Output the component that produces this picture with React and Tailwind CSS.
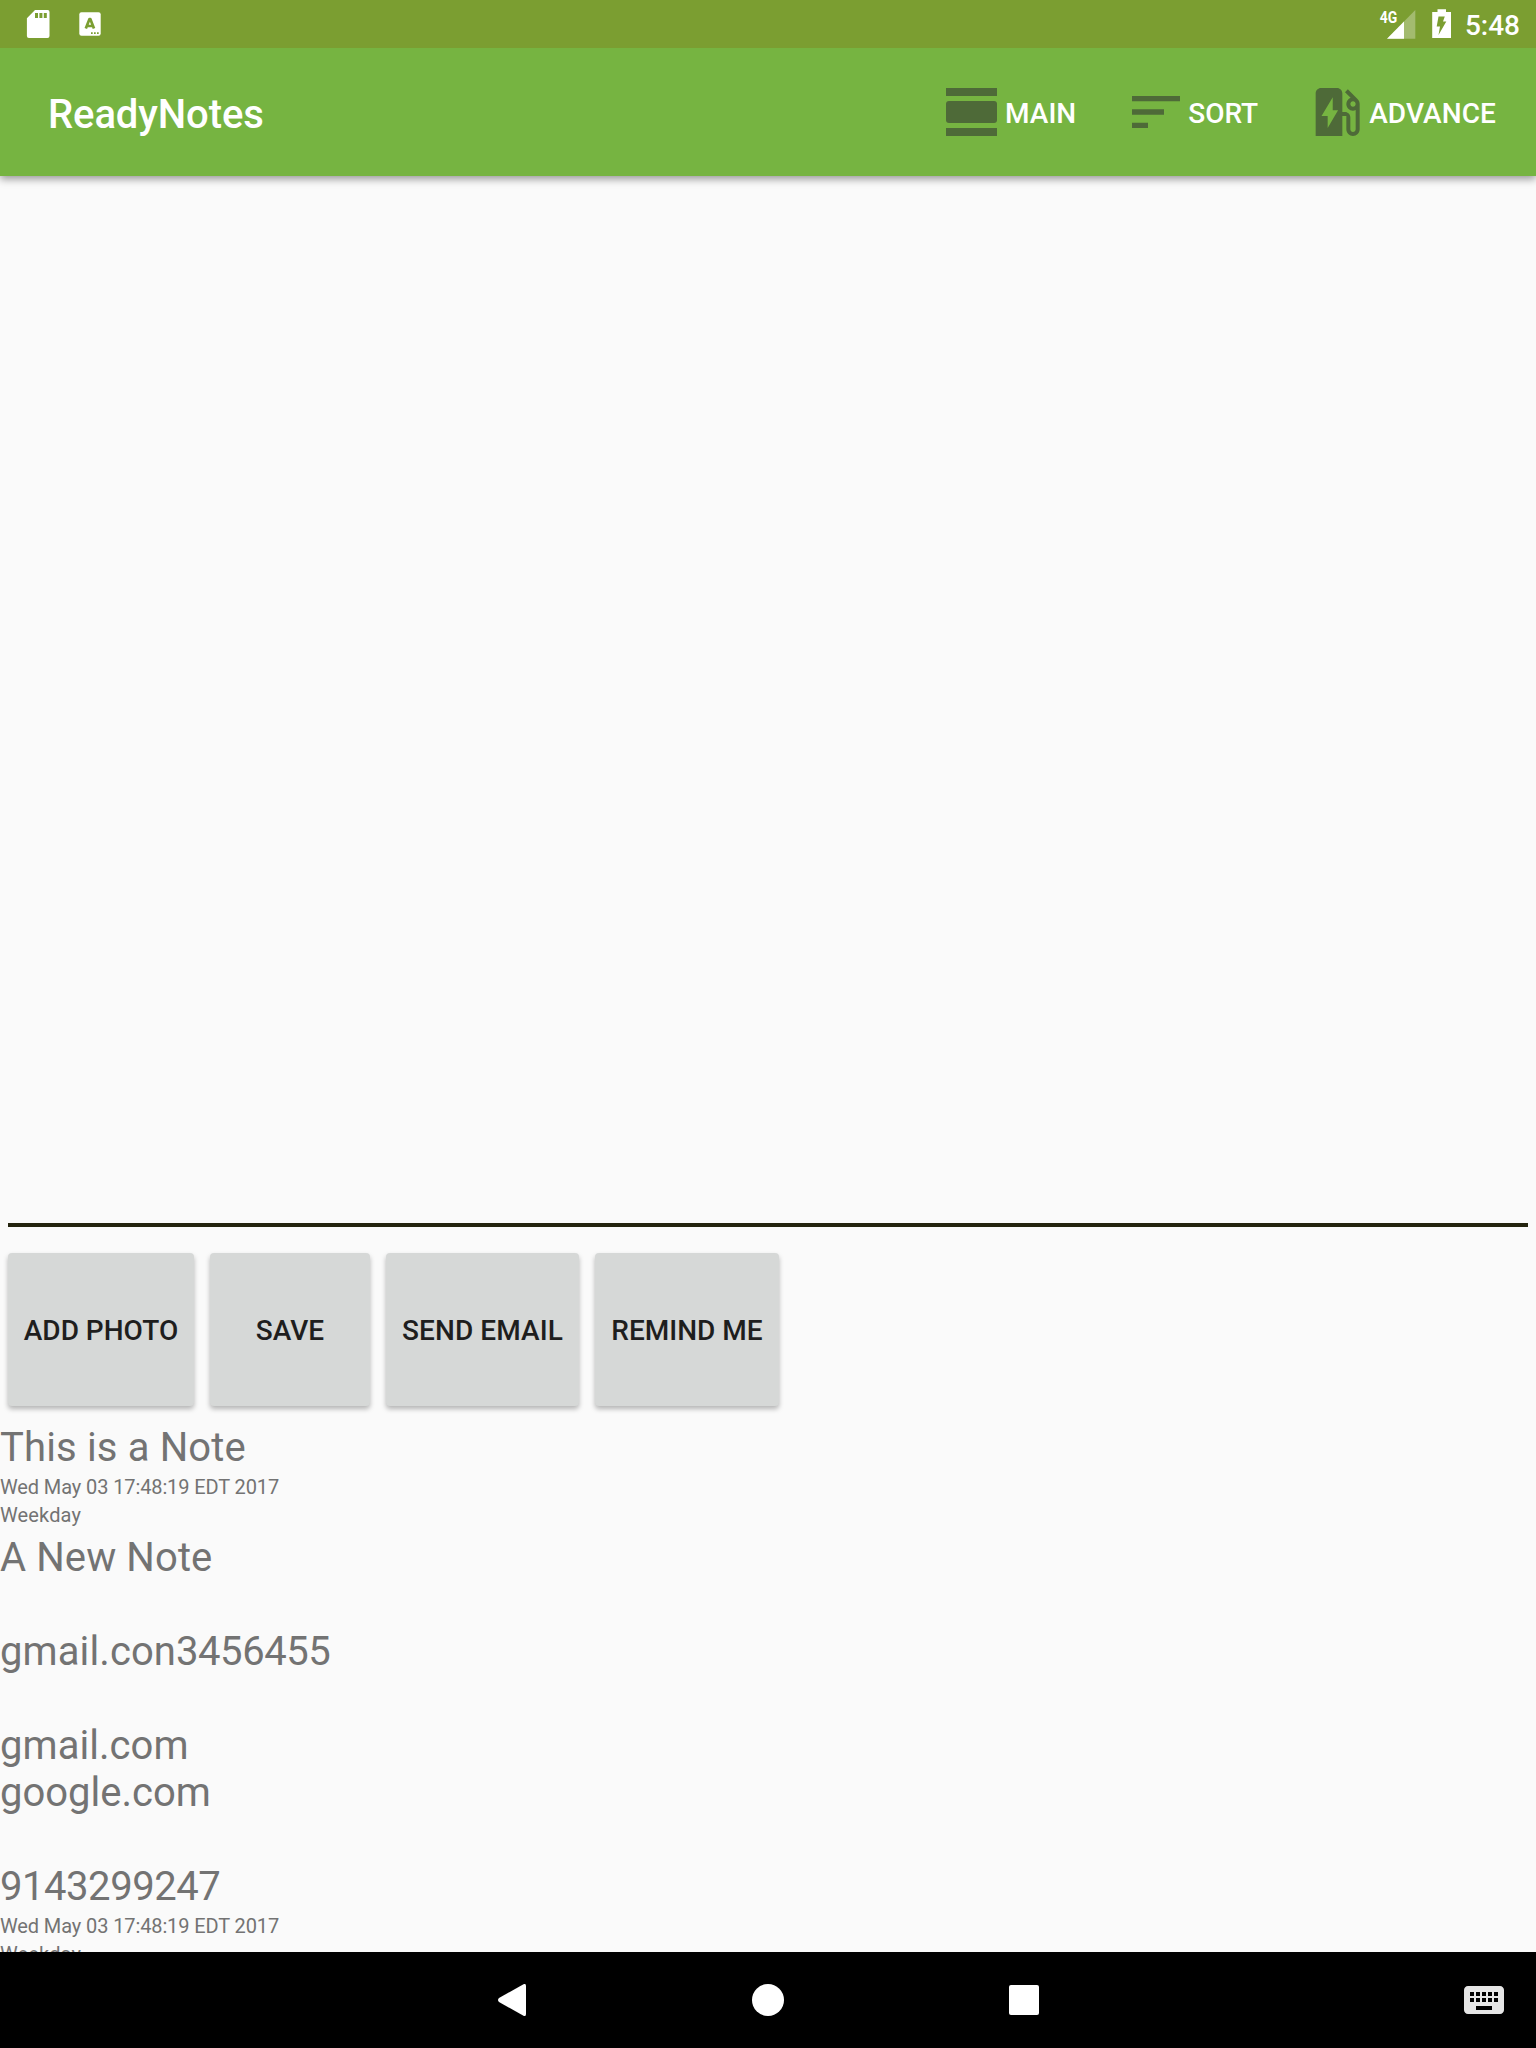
const notes = [
  {
    title: [{ text: 'This is a Note', tracking: 'tracking-[0.15px]' }],
    date: 'Wed May 03 17:48:19 EDT 2017',
    kind: 'Weekday',
  },
  {
    title: [
      { text: 'A New Note', tracking: 'tracking-[0.1px]' },
      { text: '' },
      { text: 'gmail.con', digits: '3456455', tracking: 'tracking-[0.1px]' },
      { text: '' },
      { text: 'gmail.com', tracking: 'tracking-[0.05px]' },
      { text: 'google.com' },
      { text: '' },
      { text: '', digits: '9143299247' },
    ],
    date: 'Wed May 03 17:48:19 EDT 2017',
    kind: 'Weekday',
  },
];

const buttons = [
  { label: 'ADD PHOTO', width: 'w-[186px]' },
  { label: 'SAVE', width: 'w-[160px]' },
  { label: 'SEND EMAIL', width: 'w-[193px]', tracking: 'tracking-[0.1px]' },
  { label: 'REMIND ME', width: 'w-[184px]' },
];

function StatusBar() {
  return (
    <div className="relative z-20 flex h-12 shrink-0 items-center bg-[#7b9e31] text-white">
      <svg className="ml-[26px] h-[30px] w-6" viewBox="0 0 24 30" fill="currentColor">
        <path fillRule="evenodd" d="M9 1H21.7Q23.5 1 23.5 3V27Q23.5 29 21.5 29H2.9Q.9 29 .9 27V9.3ZM9 4v5h3V4ZM13.400 4v5h3V4ZM17.800 4v5h3V4Z" />
      </svg>
      <svg className="ml-[29px] h-6 w-[22px]" viewBox="0 0 22 24">
        <rect x="0.300" y="0.300" width="21.400" height="23.400" rx="2.200" fill="currentColor" />
        <path d="M6.800 16.500 10.500 7h.8l3.700 9.500M8.200 14h5.400" fill="none" stroke="#7b9e31" strokeWidth="2.700" strokeLinejoin="round" />
        <path d="M12 20.200h1.700v1.700H12zM15 20.200h1.700v1.700H15zM18 20.200h1.700v1.700H18z" fill="#7b9e31" />
      </svg>
      <svg className="ml-auto h-[34px] w-10 overflow-visible" viewBox="-4 -2 40 34" fill="currentColor">
        <path d="M35.300 1v28.700H7Z" opacity="0.300" />
        <path d="M24 12.500V29.700H7Z" />
        <text x="-0.300" y="13.700" fontFamily="Roboto" fontSize="17" fontWeight="700" textLength="17.500" lengthAdjust="spacingAndGlyphs">4G</text>
      </svg>
      <svg className="ml-4 h-[30px] w-5" viewBox="0 0 20 30" fill="currentColor">
        <path fillRule="evenodd" d="M5.500.3h8.500V3h5v26H.2V3h5.300ZM6.500 7.500 4.700 17.500H8L6.500 26 14.300 12.500H11l1.800-5Z" />
      </svg>
      <span className="mr-4 ml-[13px] pt-0.5 text-[28px] leading-[33px] font-medium">5:48</span>
    </div>
  );
}

function ToolbarAction({ icon, label, className }) {
  return (
    <button className={`flex items-center text-[28px] leading-[33px] font-medium ${className}`}>
      {icon}
      <span className="pt-0.5">{label}</span>
    </button>
  );
}

function AppBar() {
  return (
    <header className="relative z-10 flex h-32 shrink-0 items-center bg-[#76b441] pl-12 text-white shadow-[0_3px_8px_rgba(0,0,0,0.4)]">
      <h1 className="pt-1 text-[40px] leading-[47px] font-medium tracking-[-0.1px]">ReadyNotes</h1>
      <ToolbarAction
        className="ml-auto"
        label="MAIN"
        icon={
          <svg className="mr-2 h-12 w-[51px] text-[#4e6a38]" viewBox="0 0 51 48" fill="currentColor">
            <path d="M0 0h51v8H0zM0 40h51v8H0z" />
            <rect y="13" width="51" height="22" rx="3" />
          </svg>
        }
      />
      <ToolbarAction
        className="ml-14"
        label="SORT"
        icon={
          <svg className="mr-2 h-12 w-12 text-[#4e6a38]" viewBox="0 0 48 48" fill="currentColor">
            <path d="M0 8h48v5.300H0zM0 21.300h32v5.400H0zM0 34.700h16V40H0z" />
          </svg>
        }
      />
      <ToolbarAction
        className="mr-10 ml-[47px] tracking-[0.1px]"
        label="ADVANCE"
        icon={
          <svg className="h-16 w-16 text-[#4e6a38]" viewBox="0 0 24 24" fill="currentColor">
            <path d="M19.770 7.230l.01-.01-3.720-3.720L15 4.560l2.110 2.110c-.94.36-1.610 1.260-1.610 2.330 0 1.380 1.120 2.500 2.500 2.500.36 0 .69-.08 1-.21v7.210c0 .55-.45 1-1 1s-1-.45-1-1V14c0-1.100-.9-2-2-2h-1V5c0-1.100-.9-2-2-2H6c-1.100 0-2 .9-2 2v16h10v-7.500h1.500v5c0 1.380 1.120 2.500 2.500 2.500s2.500-1.120 2.500-2.500V9c0-.69-.28-1.320-.73-1.770zM18 10c-.55 0-1-.45-1-1s.45-1 1-1 1 .45 1 1-.45 1-1 1zM8.500 18v-4.500H6.200L10.400 6.500v4.800h2z" fillRule="evenodd" />
          </svg>
        }
      />
    </header>
  );
}

function NavBar() {
  return (
    <nav className="flex h-24 shrink-0 items-center bg-black text-white">
      <svg className="ml-[496px] h-8 w-8" viewBox="0 0 32 32" fill="currentColor">
        <path d="M27.500.2Q30 -.7 30 2V30Q30 32.700 27.500 31.800L3 18Q1 16 3 14Z" />
      </svg>
      <span className="ml-56 size-8 rounded-full bg-white" />
      <span className="ml-[225px] size-[30px] rounded-[2px] bg-white" />
      <svg className="mr-7 ml-auto size-12 text-[#e6e6e6]" viewBox="0 0 24 24" fill="currentColor">
        <path d="M20 5H4c-1.100 0-1.990.9-1.990 2L2 17c0 1.100.9 2 2 2h16c1.100 0 2-.9 2-2V7c0-1.100-.9-2-2-2zm-9 3h2v2h-2V8zm0 3h2v2h-2v-2zM8 8h2v2H8V8zm0 3h2v2H8v-2zm-1 2H5v-2h2v2zm0-3H5V8h2v2zm9 7H8v-2h8v2zm0-4h-2v-2h2v2zm0-3h-2V8h2v2zm3 3h-2v-2h2v2zm0-3h-2V8h2v2z" />
      </svg>
    </nav>
  );
}

export default function App() {
  return (
    <div className="flex h-[2048px] w-[1536px] flex-col overflow-hidden bg-[#fafafa] font-['Roboto',sans-serif]">
      <StatusBar />
      <AppBar />
      <main className="flex min-h-0 flex-1 flex-col overflow-hidden">
        <div className="mx-2 h-[1051px] shrink-0 border-b-4 border-[#24240f]" />
        <div className="mt-[26px] flex shrink-0 gap-4 px-2">
          {buttons.map((b) => (
            <button
              key={b.label}
              className={`h-[153px] rounded-[4px] bg-[#d6d8d7] pt-0.5 text-[28px] font-medium whitespace-nowrap text-[#1e1e1e] shadow-[0_3px_5px_rgba(0,0,0,0.28)] ${b.width} ${b.tracking ?? ''}`}
            >
              {b.label}
            </button>
          ))}
        </div>
        <ul className="mt-[13px] text-[#737373]">
          {notes.map((n, i) => (
            <li key={i} className="pt-[5px]">
              <div className="mb-[2px] text-[40px] leading-[47px]">
                {n.title.map((line, j) => (
                  <p key={j} className={`h-[47px] ${line.tracking ?? ''}`}>
                    {line.text}
                    {line.digits && <span className="tracking-[-0.45px]">{line.digits}</span>}
                  </p>
                ))}
              </div>
              <p className="text-[20px] leading-7 tracking-[-0.11px]">{n.date}</p>
              <p className="text-[20px] leading-7 tracking-[0.15px]">{n.kind}</p>
            </li>
          ))}
        </ul>
      </main>
      <NavBar />
    </div>
  );
}
